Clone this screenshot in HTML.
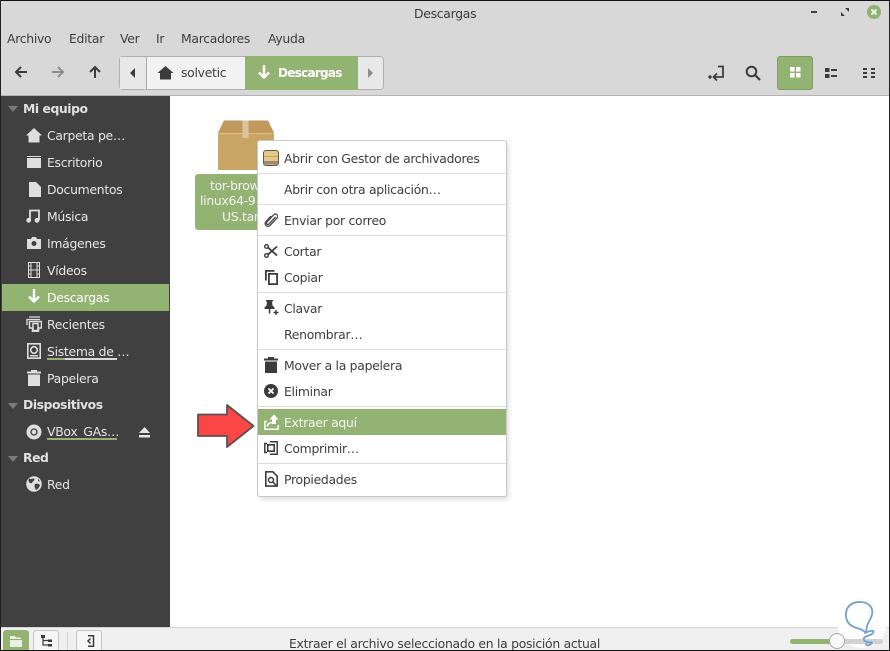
<!DOCTYPE html>
<html><head><meta charset="utf-8">
<style>
html,body{margin:0;padding:0;background:#fff}
#w{position:relative;width:890px;height:651px;overflow:hidden;background:#fff;font-family:"DejaVu Sans","Liberation Sans",sans-serif;font-size:12.4px;color:#3d3d3d}
#w div,#w span,#w svg{position:absolute}
.t{white-space:nowrap;line-height:16px;letter-spacing:-.28px;margin-top:1px}
.s{color:#e6e6e6}
.m{color:#3d3d3d}
.h{font-weight:bold;color:#e0e0e0;letter-spacing:-.45px}
.sep{left:258px;width:248px;height:1px;background:#dcdcdc}
</style></head><body>
<div id="w">
<!-- header -->
<div style="left:0;top:0;width:890px;height:96px;background:#d8d8d8"></div>
<div style="left:0;top:95px;width:890px;height:1px;background:#b4b4b4"></div>
<span class="t" style="left:414px;top:5px;font-weight:500;color:#3b3b3b">Descargas</span>
<div style="left:811px;top:11px;width:6px;height:2px;background:#404040"></div>
<svg style="left:840px;top:7px" width="10" height="10" viewBox="0 0 10 10"><path d="M1 9V5l4 4zM9 1v4L5 1z" fill="#404040"/></svg>
<div style="left:867px;top:5px;width:14px;height:14px;border-radius:50%;background:#8fb26e"></div>
<svg style="left:870px;top:8px" width="8" height="8" viewBox="0 0 8 8"><path d="M1.5 1.5l5 5M6.500 1.500l-5 5" stroke="#fff" stroke-width="1.800"/></svg>
<span class="t" style="left:7px;top:30px">Archivo</span>
<span class="t" style="left:69px;top:30px">Editar</span>
<span class="t" style="left:120px;top:30px">Ver</span>
<span class="t" style="left:156px;top:30px">Ir</span>
<span class="t" style="left:181px;top:30px">Marcadores</span>
<span class="t" style="left:268px;top:30px">Ayuda</span>
<!-- nav -->
<svg style="left:14px;top:65px" width="14" height="14" viewBox="0 0 14 14"><path d="M13 7H2M7 2L2 7l5 5" fill="none" stroke="#3c3c3c" stroke-width="2"/></svg>
<svg style="left:51px;top:65px" width="14" height="14" viewBox="0 0 14 14"><path d="M1 7h11M7 2l5 5-5 5" fill="none" stroke="#8e8e8e" stroke-width="2"/></svg>
<svg style="left:88px;top:65px" width="14" height="14" viewBox="0 0 14 14"><path d="M7 13V2M2 7l5-5 5 5" fill="none" stroke="#3c3c3c" stroke-width="2"/></svg>
<div style="left:119px;top:56px;width:265px;height:34px;border:1px solid #b0b0b0;border-radius:4px;background:#f2f2f2;box-sizing:border-box"></div>
<div style="left:120px;top:57px;width:26px;height:32px;background:#e8e8e8"></div>
<div style="left:146px;top:57px;width:1px;height:32px;background:#a8a8a8"></div>
<svg style="left:130px;top:68px" width="6" height="10"><path d="M5 0v10L0 5z" fill="#3c3c3c"/></svg>
<svg style="left:157px;top:65px" width="17" height="15" viewBox="0 0 17 15"><path d="M8.500 1L0.500 8H3v6.500h11V8h2.500z" fill="#3c3c3c"/></svg>
<span class="t" style="left:181px;top:64px">solvetic</span>
<div style="left:245px;top:56px;width:113px;height:34px;background:#93b373"></div>
<svg style="left:257px;top:65px" width="14" height="15" viewBox="0 0 14 15"><path d="M7 0v12M2 7.500l5 5 5-5" fill="none" stroke="#fff" stroke-width="2.400"/></svg>
<span class="t" style="left:278px;top:64px;font-weight:bold;color:#fff;font-size:12px;letter-spacing:-.72px">Descargas</span>
<div style="left:358px;top:57px;width:25px;height:32px;background:#e8e8e8;border-radius:0 3px 3px 0"></div>
<svg style="left:368px;top:68px" width="6" height="10"><path d="M0 0v10l5-5z" fill="#8c8c8c"/></svg>
<!-- right tools -->
<svg style="left:708px;top:65px" width="17" height="16" viewBox="0 0 17 16"><circle cx="2" cy="12" r="1.700" fill="#3c3c3c"/><path d="M10 1.500h5v10.500H6M9 8.500L5.500 12 9 15.500" fill="none" stroke="#3c3c3c" stroke-width="1.800"/></svg>
<svg style="left:745px;top:65px" width="16" height="16" viewBox="0 0 16 16"><circle cx="6.500" cy="6.500" r="4.800" fill="none" stroke="#3c3c3c" stroke-width="2"/><path d="M10 10l5 5" stroke="#3c3c3c" stroke-width="2.200"/></svg>
<div style="left:777px;top:56px;width:36px;height:34px;background:#93b373;border:1px solid #7f9c62;border-radius:3px;box-sizing:border-box"></div>
<svg style="left:790px;top:67px" width="11" height="11"><path d="M0 0h4.500v4.500H0zM6 0h4.500v4.500H6zM0 6h4.500v4.500H0zM6 6h4.500v4.500H6z" fill="#fff"/></svg>
<svg style="left:825px;top:68px" width="14" height="11"><path d="M0 0h4.500v4H0zM0 6h4.500v4H0zM6 1h6v2H6zM6 7h6v2H6z" fill="#3c3c3c"/></svg>
<svg style="left:863px;top:68px" width="13" height="11"><path d="M0 0h4v2H0zM8 0h4v2H8zM0 4h4v2H0zM8 4h4v2H8zM0 8h4v2H0zM8 8h4v2H8z" fill="#3c3c3c"/></svg>
<!-- sidebar -->
<div style="left:0;top:96px;width:170px;height:531px;background:#404040"></div>
<div style="left:2px;top:284px;width:167px;height:27px;background:#93b373"></div>
<svg style="left:8px;top:106px" width="11" height="6"><path d="M0 0h10L5 6z" fill="#7a7a7a"/></svg>
<span class="t h" style="left:23px;top:100px">Mi equipo</span>
<span class="t s" style="left:47px;top:127px">Carpeta pe…</span>
<span class="t s" style="left:47px;top:154px">Escritorio</span>
<span class="t s" style="left:47px;top:181px">Documentos</span>
<span class="t s" style="left:47px;top:208px">Música</span>
<span class="t s" style="left:47px;top:235px">Imágenes</span>
<span class="t s" style="left:47px;top:262px">Vídeos</span>
<span class="t" style="left:47px;top:289px;color:#fff">Descargas</span>
<span class="t s" style="left:47px;top:316px">Recientes</span>
<span class="t s" style="left:47px;top:343px">Sistema de …</span>
<div style="left:47px;top:358px;width:70px;height:2px;background:#d8d8d8"></div>
<div style="left:47px;top:358px;width:18px;height:2px;background:#93b373"></div>
<span class="t s" style="left:47px;top:370px">Papelera</span>
<svg style="left:8px;top:403px" width="11" height="6"><path d="M0 0h10L5 6z" fill="#7a7a7a"/></svg>
<span class="t h" style="left:23px;top:396px">Dispositivos</span>
<span class="t s" style="left:47px;top:423px">VBox_GAs…</span>
<div style="left:47px;top:438px;width:70px;height:2px;background:#93b373"></div>
<svg style="left:139px;top:427px" width="11" height="11"><path d="M5.500 0L11 6H0zM0 8h11v2.500H0z" fill="#e6e6e6"/></svg>
<svg style="left:8px;top:456px" width="11" height="6"><path d="M0 0h10L5 6z" fill="#7a7a7a"/></svg>
<span class="t h" style="left:23px;top:449px">Red</span>
<span class="t s" style="left:47px;top:476px">Red</span>
<!-- sidebar icons -->
<svg style="left:26px;top:128px" width="16" height="15" viewBox="0 0 16 15"><path d="M8 0L0 7.500h2.500V14.500h11V7.500H16z" fill="#dedede"/></svg>
<svg style="left:27px;top:156px" width="14" height="12" viewBox="0 0 14 12"><path d="M0 0h14v12H0z" fill="#dedede"/><path d="M0 1.500h14" stroke="#404040"/></svg>
<svg style="left:29px;top:182px" width="12" height="15" viewBox="0 0 12 15"><path d="M0 0h7l5 5v10H0z" fill="#dedede"/></svg>
<svg style="left:26px;top:209px" width="14" height="14" viewBox="0 0 14 14"><path d="M4 11V1.500h9V11" fill="none" stroke="#dedede" stroke-width="1.800"/><circle cx="2.700" cy="11.300" r="2.400" fill="#dedede"/><circle cx="11" cy="11.300" r="2.400" fill="#dedede"/></svg>
<svg style="left:27px;top:237px" width="14" height="12" viewBox="0 0 14 12"><path d="M0 2h4l1-2h4l1 2h4v10H0z" fill="#dedede"/><circle cx="7" cy="6.500" r="2.500" fill="#404040"/></svg>
<svg style="left:28px;top:262px" width="12" height="16" viewBox="0 0 12 16"><path d="M.5.500h11v15H.5zM3 .5v15M9 .5v15M3 8h6M0 4h3M0 8h3M0 12h3M9 4h3M9 8h3M9 12h3" fill="none" stroke="#dedede"/></svg>
<svg style="left:27px;top:289px" width="14" height="15" viewBox="0 0 14 15"><path d="M7 0v12M2 7.500l5 5 5-5" fill="none" stroke="#fff" stroke-width="2.400"/></svg>
<svg style="left:26px;top:316px" width="16" height="16" viewBox="0 0 16 16"><path d="M1 9V3.500h13M3 1h11" fill="none" stroke="#dedede" stroke-width="1.300"/><path d="M3.500 5.500h12V12h-3v3.500h-6V12h-3z" fill="none" stroke="#dedede" stroke-width="1.500"/><path d="M7 7.500h5v7H7z" fill="none" stroke="#dedede" stroke-width="1.500"/></svg>
<svg style="left:27px;top:343px" width="14" height="16" viewBox="0 0 14 16"><path d="M.8.800h12.400v14.400H.8z" fill="none" stroke="#dedede" stroke-width="1.600"/><circle cx="7" cy="7" r="3.300" fill="none" stroke="#dedede" stroke-width="1.600"/><path d="M3 12.800h8" stroke="#dedede" stroke-width="1.500"/></svg>
<svg style="left:27px;top:370px" width="14" height="16" viewBox="0 0 14 16"><path d="M4 0h6v1.500h4v2H0v-2h4zM1 4.500h12V16H1z" fill="#dedede"/></svg>
<svg style="left:26px;top:424px" width="16" height="16" viewBox="0 0 16 16"><circle cx="8" cy="8" r="7.500" fill="#dedede"/><circle cx="8" cy="8" r="3" fill="none" stroke="#404040" stroke-width="1.300"/></svg>
<svg style="left:26px;top:476px" width="16" height="16" viewBox="0 0 16 16"><circle cx="8" cy="8" r="7.800" fill="#dedede"/><path d="M3 2.500c2 1 3 0 5 0 1 1 0 2-1 3S5 8 4 7 2 5 3 2.500zM9 8c2-1 4 0 5 1-1 3-2 4-4 5-1-2-2-4-1-6zM12 2.500l2 3-2-.5z" fill="#404040"/></svg>
<!-- file icon -->
<svg style="left:218px;top:120px" width="58" height="50" viewBox="0 0 58 50"><path d="M6 .5h44L56 13V50H0V13z" fill="#c9a565"/><path d="M6 .5h44L56 13H0z" fill="#bf9a5c"/><path d="M0 13.500h56" stroke="#dcc08a"/><path d="M24.500.5h6V18h-6z" fill="#dcc39a"/></svg>
<div style="left:195px;top:174px;width:75px;height:56px;background:#93b373;border-radius:3px"></div>
<span class="t" style="left:210px;top:177px;color:#f2f2f2">tor-brow</span>
<span class="t" style="left:200px;top:192px;color:#f2f2f2">linux64-9</span>
<span class="t" style="left:222px;top:208px;color:#f2f2f2">US.tar</span>
<!-- arrow -->
<svg style="left:195px;top:402px" width="62" height="48" viewBox="0 0 62 48"><path d="M3 12.500H32V3L58.500 24 32 45V34H3z" fill="#fb4646" stroke="#5a5050" stroke-width="1.800" stroke-linejoin="round"/></svg>
<!-- menu -->
<div style="left:257px;top:140px;width:250px;height:357px;background:#fff;border:1px solid #c8c8c8;border-radius:3px;box-sizing:border-box;box-shadow:2px 3px 4px rgba(0,0,0,.12)"></div>
<div class="sep" style="top:173px"></div>
<div class="sep" style="top:204px"></div>
<div class="sep" style="top:235px"></div>
<div class="sep" style="top:292px"></div>
<div class="sep" style="top:349px"></div>
<div class="sep" style="top:406px"></div>
<div class="sep" style="top:463px"></div>
<div style="left:258px;top:409px;width:248px;height:26px;background:#93b373"></div>
<span class="t m" style="left:284px;top:150px">Abrir con Gestor de archivadores</span>
<span class="t m" style="left:284px;top:181px">Abrir con otra aplicación…</span>
<span class="t m" style="left:284px;top:212px">Enviar por correo</span>
<span class="t m" style="left:284px;top:243px">Cortar</span>
<span class="t m" style="left:284px;top:269px">Copiar</span>
<span class="t m" style="left:284px;top:300px">Clavar</span>
<span class="t m" style="left:284px;top:326px">Renombrar…</span>
<span class="t m" style="left:284px;top:357px">Mover a la papelera</span>
<span class="t m" style="left:284px;top:383px">Eliminar</span>
<span class="t" style="left:284px;top:414px;color:#f4f4f4">Extraer aquí</span>
<span class="t m" style="left:284px;top:440px">Comprimir…</span>
<span class="t m" style="left:284px;top:471px">Propiedades</span>
<!-- menu icons -->
<svg style="left:263px;top:150px" width="16" height="16" viewBox="0 0 16 16"><rect x=".5" y=".5" width="15" height="15" rx="2.500" fill="#e5c88a" stroke="#5e5a52"/><path d="M1 6.500h14" stroke="#c9a25f"/><path d="M1 11h14v3.500H1z" fill="#9e8b6f"/></svg>
<svg style="left:264px;top:212px" width="14" height="16" viewBox="0 0 14 16"><path d="M11.500 5L5 12c-1.500 1.500-3.500-.5-2-2l6.500-7c2.500-2.500 5.500.5 3.500 3l-7 7.500c-3 2.500-6.500-1-4-4L7 4" fill="none" stroke="#4a4a4a" stroke-width="1.300"/></svg>
<svg style="left:264px;top:244px" width="14" height="14" viewBox="0 0 14 14"><circle cx="2.500" cy="2.500" r="1.800" fill="none" stroke="#3c3c3c" stroke-width="1.400"/><circle cx="2.500" cy="11.500" r="1.800" fill="none" stroke="#3c3c3c" stroke-width="1.400"/><path d="M4 3.500L13 11.500M4 10.500L13 2.500" stroke="#3c3c3c" stroke-width="1.800"/></svg>
<svg style="left:265px;top:270px" width="13" height="15" viewBox="0 0 13 15"><path d="M.9 10.500V.9H9.500" fill="none" stroke="#3c3c3c" stroke-width="1.800"/><path d="M3.900 3.900h8.200v10.200H3.900z" fill="none" stroke="#3c3c3c" stroke-width="1.800"/></svg>
<svg style="left:264px;top:300px" width="15" height="16" viewBox="0 0 15 16"><path d="M2 0h7v1.500H8l.5 4 2 2V9H6.300v4.500H4.800V9H.5V7.500l2-2L3 1.500H2z" fill="#3c3c3c"/><path d="M9.500 12.500h5M12 10v5" stroke="#3c3c3c" stroke-width="1.400"/></svg>
<svg style="left:264px;top:357px" width="14" height="16" viewBox="0 0 14 16"><path d="M4 0h6v1.500h4v2H0v-2h4zM1 4.500h12V16H1z" fill="#3c3c3c"/></svg>
<svg style="left:264px;top:384px" width="14" height="14" viewBox="0 0 14 14"><circle cx="7" cy="7" r="7" fill="#3c3c3c"/><path d="M4.500 4.500l5 5M9.500 4.500l-5 5" stroke="#fff" stroke-width="1.800"/></svg>
<svg style="left:264px;top:414px" width="15" height="16" viewBox="0 0 15 16"><path d="M3 7.500H.8v7.700h13.400V11" fill="none" stroke="#fff" stroke-width="1.500"/><path d="M10 .5L14.500 5.500H12V10H8V5.500H5.500z" fill="#fff"/><path d="M3 12.500C4 9.500 5.500 8.500 8 8.500" stroke="#fff" stroke-width="1.500" fill="none"/></svg>
<svg style="left:264px;top:441px" width="14" height="14" viewBox="0 0 14 14"><path d="M5.800.8h7.400v12.400H5.800" fill="none" stroke="#3c3c3c" stroke-width="1.500"/><path d="M3 2.500H.8v9H3" fill="none" stroke="#3c3c3c" stroke-width="1.500"/><path d="M3.800 3.800h6.400v6.400H3.800z" fill="none" stroke="#3c3c3c" stroke-width="1.600"/></svg>
<svg style="left:265px;top:471px" width="13" height="16" viewBox="0 0 13 16"><path d="M.8.800h7l4.400 4.400v9.900H.8z" fill="none" stroke="#3c3c3c" stroke-width="1.600"/><circle cx="6" cy="9" r="2.500" fill="none" stroke="#3c3c3c" stroke-width="1.500"/><path d="M8 11l3 3.500" stroke="#3c3c3c" stroke-width="1.600"/></svg>
<!-- status bar -->
<div style="left:0;top:627px;width:890px;height:24px;background:#f0f0f0"></div>
<div style="left:0;top:627px;width:890px;height:1px;background:#d4d4d4"></div>
<div style="left:3px;top:630px;width:26px;height:21px;background:#93b373;border-radius:3px 3px 0 0"></div>
<svg style="left:10px;top:636px" width="13" height="11"><path d="M0 0h5l1 1.500h5V3H0zM0 4h12v7H0z" fill="#e9efe2"/></svg>
<div style="left:33px;top:630px;width:26px;height:21px;background:#f6f6f6;border:1px solid #c4c4c4;border-bottom:0;border-radius:3px 3px 0 0;box-sizing:border-box"></div>
<svg style="left:40px;top:635px" width="13" height="14"><path d="M3 1v9h7M3 5.500h7" fill="none" stroke="#3c3c3c" stroke-width="1.200"/><path d="M1 0h4v3H1zM8 4.500h4V7H8zM8 9h4v2.500H8z" fill="#3c3c3c"/></svg>
<div style="left:67px;top:632px;width:1px;height:19px;background:#d0d0d0"></div>
<div style="left:76px;top:630px;width:26px;height:21px;background:#f6f6f6;border:1px solid #c4c4c4;border-bottom:0;border-radius:3px 3px 0 0;box-sizing:border-box"></div>
<svg style="left:84px;top:635px" width="11" height="13"><path d="M4 .8h5.500v10.400H4M6.500 3.500L4 6l2.500 2.500" fill="none" stroke="#3c3c3c" stroke-width="1.500"/></svg>
<span class="t" style="left:289px;top:635px">Extraer el archivo seleccionado en la posición actual</span>
<!-- watermark -->
<div style="left:837px;top:598px;width:50px;height:50px;border-radius:50%;background:rgba(255,255,255,.88)"></div>
<div style="left:790px;top:639px;width:42px;height:5px;background:#93b373;border-radius:3px 0 0 3px"></div>
<div style="left:832px;top:639px;width:51px;height:5px;background:#d2d2d2;border-radius:0 3px 3px 0"></div>
<div style="left:829px;top:633px;width:16px;height:16px;border-radius:50%;background:#f8f8f8;border:1px solid #a8a8a8;box-sizing:border-box"></div>
<svg style="left:840px;top:600px" width="46" height="48" viewBox="0 0 46 48"><path d="M25 32c-4-4-8-3-13-6-7-4-8-14-3-20 6-6 18-5 22 1 4 7-2 13-4 19l-1 6M25 33c6-3 10-3 8 0s-11 3-9 7 11 1 7 4-5 0-5 0" fill="none" stroke="#6ea2cf" stroke-width="1.800" stroke-linecap="round"/></svg>
<!-- borders -->
<div style="left:0;top:0;width:890px;height:1px;background:#111"></div>
<div style="left:0;top:650px;width:890px;height:1px;background:#111"></div>
<div style="left:0;top:0;width:1px;height:651px;background:#222"></div>
<div style="left:889px;top:0;width:1px;height:651px;background:#222"></div>
</div>
</body></html>
